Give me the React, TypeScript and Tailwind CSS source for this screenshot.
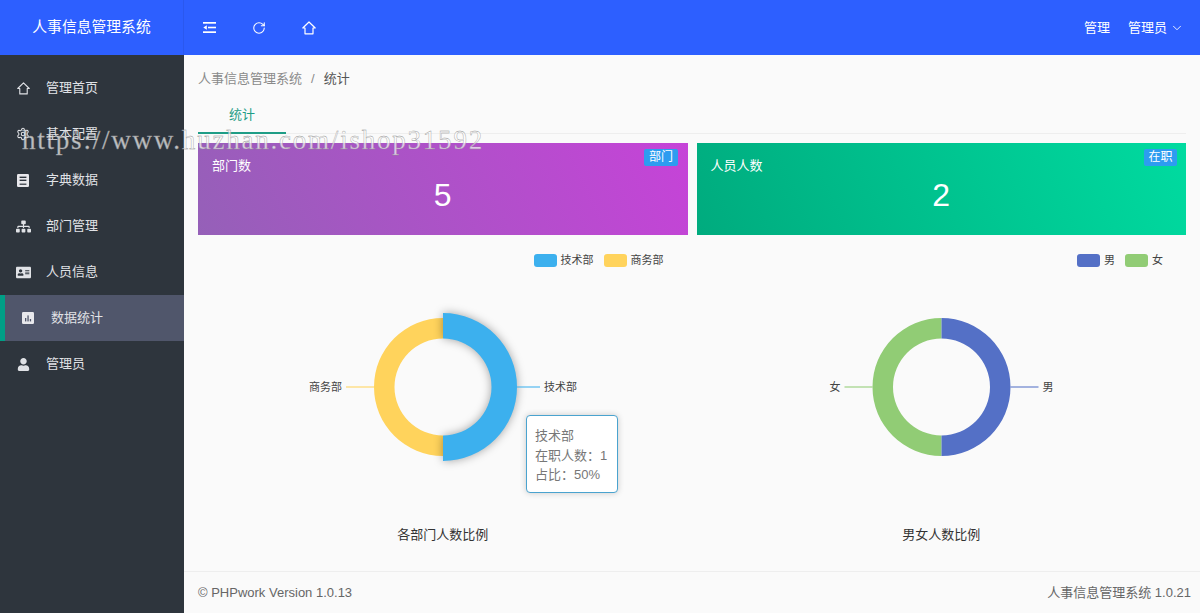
import { ChevronDown, RotateCw, Settings } from 'lucide-react';
import { FaSitemap, FaAddressCard, FaUser } from 'react-icons/fa';

const font = "font-['Liberation_Sans','Noto_Sans_CJK_SC',sans-serif]";

function HomeIcon({ className }: { className?: string }) {
  return (
    <svg viewBox="0 0 14 14" className={className} fill="none" stroke="currentColor" strokeWidth="1.2" strokeLinejoin="round">
      <path d="M7 1 L13.2 7 H11 V12.8 H3 V7 H0.8 Z" />
    </svg>
  );
}

function ShrinkIcon() {
  return (
    <svg viewBox="0 0 13 11" className="h-[11px] w-[13px]" fill="currentColor">
      <rect x="0" y="0" width="13" height="1.7" />
      <rect x="5" y="4.7" width="8" height="1.6" />
      <rect x="0" y="9.3" width="13" height="1.7" />
      <path d="M0.3 5.5 L3.8 3.2 V7.8 Z" />
    </svg>
  );
}

function BookIcon() {
  return (
    <svg viewBox="0 0 12 13" className="h-[13px] w-3">
      <rect width="12" height="13" rx="1.2" fill="#e8e8ec" />
      <rect x="2.6" y="2.6" width="6.8" height="1.4" fill="#2e353d" />
      <rect x="2.6" y="5.6" width="6.8" height="1.4" fill="#2e353d" />
      <rect x="2.6" y="9.6" width="6.8" height="1.2" fill="#2e353d" />
    </svg>
  );
}

function StatIcon() {
  return (
    <svg viewBox="0 0 12 12" className="h-3 w-3">
      <rect width="12" height="12" rx="1.2" fill="#e8e8ec" />
      <rect x="3" y="6" width="1.3" height="3.4" fill="#50566b" />
      <rect x="5.4" y="3.4" width="1.3" height="6" fill="#50566b" />
      <rect x="7.8" y="7" width="1.3" height="2.4" fill="#50566b" />
    </svg>
  );
}

const menu = [
  { label: '管理首页', icon: <HomeIcon className="h-[13px] w-[13px]" /> },
  { label: '基本配置', icon: <Settings className="h-[14px] w-[14px]" strokeWidth={1.8} /> },
  { label: '字典数据', icon: <BookIcon /> },
  { label: '部门管理', icon: <FaSitemap className="h-[15px] w-[15px]" /> },
  { label: '人员信息', icon: <FaAddressCard className="h-[15px] w-[15px]" /> },
  { label: '数据统计', icon: <StatIcon />, active: true },
  { label: '管理员', icon: <FaUser className="h-[13px] w-[13px]" /> },
];

function arc(cx: number, cy: number, r0: number, r1: number, from: number, to: number) {
  const pt = (r: number, a: number) => `${cx + r * Math.sin(a)} ${cy - r * Math.cos(a)}`;
  return `M${pt(r1, from)} A${r1} ${r1} 0 0 1 ${pt(r1, to)} L${pt(r0, to)} A${r0} ${r0} 0 0 0 ${pt(r0, from)} Z`;
}

type Slice = { name: string; color: string };

function Legend({ items, className }: { items: Slice[]; className: string }) {
  return (
    <div className={`flex justify-end gap-[10px] text-[11px] leading-[14px] text-[#444] ${className}`}>
      {items.map((s) => (
        <div key={s.name} className="flex items-center gap-1">
          <span className="h-[13px] w-[23px] rounded-[3px]" style={{ background: s.color }} />
          <span>{s.name}</span>
        </div>
      ))}
    </div>
  );
}

function Donut({ right, left, cx, big }: { right: Slice; left: Slice; cx: number; big?: boolean }) {
  const cy = 120;
  const rr = big ? 74 : 69;
  return (
    <svg width="100%" height="250" className="block">
      <path d={arc(cx, cy, 48.5, 69, Math.PI, Math.PI * 2)} fill={left.color} />
      <path d={arc(cx, cy, 48.5, rr, 0, Math.PI)} fill={right.color} className={big ? 'drop-shadow-[0_0_5px_rgba(0,0,0,0.35)]' : ''} />
      <line x1={cx + rr} x2={cx + 97} y1={cy} y2={cy} stroke={right.color} strokeWidth="1.5" opacity="0.7" />
      <line x1={cx - 69} x2={cx - 97} y1={cy} y2={cy} stroke={left.color} strokeWidth="1.5" opacity="0.7" />
      <text x={cx + 101} y={cy + 4} fontSize="11" fill="#444">{right.name}</text>
      <text x={cx - 101} y={cy + 4} fontSize="11" fill="#444" textAnchor="end">{left.name}</text>
    </svg>
  );
}

function StatCard({ title, tag, value, gradient, tagPos }: { title: string; tag: string; value: string; gradient: string; tagPos: string }) {
  return (
    <div className={`relative h-[92px] px-[14px] pt-[14px] text-white ${gradient}`}>
      <span className={`absolute top-[6px] rounded-[2px] bg-[#2d9cf0] px-[4.5px] text-[12px] leading-[17px] ${tagPos}`}>{tag}</span>
      <div className="text-[13px] leading-[18px]">{title}</div>
      <div className="text-center text-[32px] leading-[40px] font-['Liberation_Sans',sans-serif]">{value}</div>
    </div>
  );
}

export default function App() {
  const dept: Slice[] = [
    { name: '技术部', color: '#3cb0ee' },
    { name: '商务部', color: '#ffd35c' },
  ];
  const sex: Slice[] = [
    { name: '男', color: '#5470c6' },
    { name: '女', color: '#91cc75' },
  ];

  return (
    <div className={`relative flex h-screen w-full flex-col overflow-hidden bg-[#fafafa] ${font}`}>
      <header className="flex h-[55px] shrink-0 items-center bg-[#2d5fff] text-white">
        <div className="flex h-full w-[184px] items-center justify-center border-r border-[#2a58ee] text-[14.8px]">人事信息管理系统</div>
        <div className="flex flex-1 items-center">
          <div className="flex w-[50px] justify-center"><ShrinkIcon /></div>
          <div className="flex w-[50px] justify-center"><RotateCw className="h-[14px] w-[14px]" strokeWidth={1.8} /></div>
          <div className="flex w-[50px] justify-center"><HomeIcon className="h-[14px] w-[14px]" /></div>
        </div>
        <div className="flex items-center pr-[16px] text-[13px]">
          <span className="mr-[18px]">管理</span>
          <span>管理员</span>
          <ChevronDown className="ml-[3px] h-[14px] w-[14px]" strokeWidth={1.5} />
        </div>
      </header>

      <div className="flex min-h-0 flex-1">
        <aside className="w-[184px] shrink-0 bg-[#2e353d] pt-[10px] text-[13px] text-[#e0e2e6]">
          {menu.map((m) => (
            <div key={m.label} className={`flex h-[46px] items-center ${m.active ? 'border-l-[5px] border-[#009f86] bg-[#50566b]' : ''}`}>
              <span className="flex w-[46px] justify-center">{m.icon}</span>
              <span>{m.label}</span>
            </div>
          ))}
        </aside>

        <main className="flex min-w-0 flex-1 flex-col">
          <div className="flex-1 px-[14px]">
            <div className="flex h-[47px] items-center pt-[1px] text-[13px] text-[#8a8a8a]">
              <span>人事信息管理系统</span>
              <span className="mx-[9px]">/</span>
              <span className="text-[#555]">统计</span>
            </div>
            <div className="h-[32px] border-b border-[#eeeeee]">
              <div className="h-[32px] w-[88px] border-b-2 border-[#1f9d86] text-center text-[13px] leading-[26px] text-[#1f9d86]">统计</div>
            </div>

            <div className="mt-[9px] grid grid-cols-2 gap-[9px]">
              <div className="relative min-w-0">
                <StatCard title="部门数" tag="部门" value="5" tagPos="right-[10px]" gradient="bg-[linear-gradient(65deg,#9560b8,#c643d8)]" />
                <Legend items={dept} className="mt-[18px] pr-[24px]" />
                <Donut cx={245} right={dept[0]} left={dept[1]} big />
                <div className="absolute left-[328px] top-[272px] h-[78px] w-[92px] whitespace-nowrap rounded-[4px] border border-[#4aa3cf] bg-white px-[8px] py-[10px] text-[13px] leading-[19.5px] text-[#777] shadow-[0_0_6px_rgba(0,0,0,0.2)]">
                  <div>技术部</div>
                  <div>在职人数：1</div>
                  <div>占比：50%</div>
                </div>
                <div className="mt-[8px] text-center text-[13px] text-[#333]">各部门人数比例</div>
              </div>
              <div className="min-w-0">
                <StatCard title="人员人数" tag="在职" value="2" tagPos="right-[9px]" gradient="bg-[linear-gradient(65deg,#00ab7e,#00dba0)]" />
                <Legend items={sex} className="mt-[18px] pr-[23px]" />
                <Donut cx={244.5} right={sex[0]} left={sex[1]} />
                <div className="mt-[8px] text-center text-[13px] text-[#333]">男女人数比例</div>
              </div>
            </div>
          </div>

          <footer className="flex h-[42px] shrink-0 items-center justify-between border-t border-[#eeeeee] pl-[14px] pr-[9px] text-[13px] text-[#666]">
            <span>© PHPwork Version 1.0.13</span>
            <span>人事信息管理系统 1.0.21</span>
          </footer>
        </main>
      </div>

      <div className="pointer-events-none absolute left-[22px] top-[124px] whitespace-nowrap font-['Liberation_Serif',serif] text-[27px] leading-[32px] tracking-[1.78px] text-white/70 [-webkit-text-stroke:0.35px_#8f8f8f]">
        https://www.huzhan.com/ishop31592
      </div>
    </div>
  );
}
